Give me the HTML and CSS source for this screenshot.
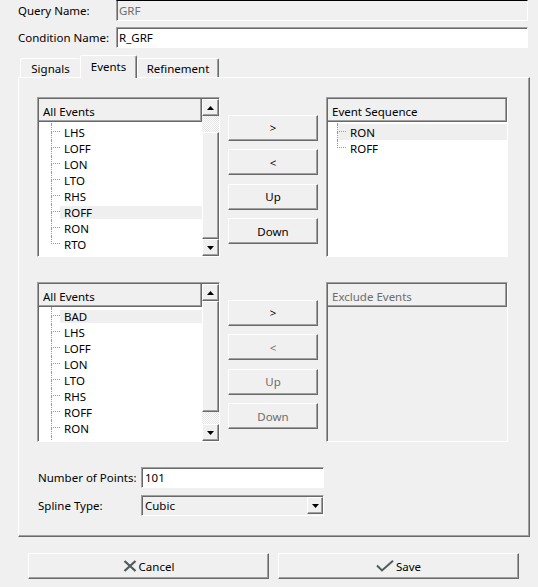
FILE: index.html
```html
<!DOCTYPE html>
<html>
<head>
<meta charset="utf-8">
<title>Condition</title>
<link rel="stylesheet" href="styles.css">
</head>
<body>
<div class="app">
  <div class="field-row">
    <span class="lbl">Query Name:</span>
    <div class="entry ro">GRF</div>
  </div>
  <div class="field-row r2">
    <span class="lbl">Condition Name:</span>
    <div class="entry">R_GRF</div>
  </div>

  <div class="tabs">
    <div class="tab t-signals">Signals</div>
    <div class="tab t-events">Events</div>
    <div class="tab t-ref">Refinement</div>
  </div>

  <div class="panel">
    <div class="section">
      <div class="tree">
        <div class="tree-main">
          <div class="tree-head">All Events</div>
          <div class="tree-body">
            <div class="row"><span class="conn"><i></i><b></b></span><span class="item">LHS</span></div>
            <div class="row"><span class="conn"><i></i><b></b></span><span class="item">LOFF</span></div>
            <div class="row"><span class="conn"><i></i><b></b></span><span class="item">LON</span></div>
            <div class="row"><span class="conn"><i></i><b></b></span><span class="item">LTO</span></div>
            <div class="row"><span class="conn"><i></i><b></b></span><span class="item">RHS</span></div>
            <div class="row"><span class="conn"><i></i><b></b></span><span class="item sel">ROFF</span></div>
            <div class="row"><span class="conn"><i></i><b></b></span><span class="item">RON</span></div>
            <div class="row"><span class="conn"><i></i></span><span class="item">RTO</span></div>
          </div>
        </div>
        <div class="vscroll">
          <div class="sb-btn"><svg width="7" height="4" viewBox="0 0 7 4"><path d="M0 4H7L3.5 0Z" fill="#000"/></svg></div>
          <div class="sb-trough t1"></div>
          <div class="sb-thumb th1"></div>
          <div class="sb-btn"><svg width="7" height="4" viewBox="0 0 7 4"><path d="M0 0H7L3.5 4Z" fill="#000"/></svg></div>
        </div>
      </div>

      <div class="btns">
        <div class="btn">&gt;</div>
        <div class="btn">&lt;</div>
        <div class="btn">Up</div>
        <div class="btn">Down</div>
      </div>

      <div class="tree seq">
        <div class="tree-main">
          <div class="tree-head">Event Sequence</div>
          <div class="tree-body">
            <div class="row full-sel"><span class="conn"><i></i><b></b></span><span class="item">RON</span></div>
            <div class="row"><span class="conn"><i></i></span><span class="item">ROFF</span></div>
          </div>
        </div>
      </div>
    </div>

    <div class="section s2">
      <div class="tree">
        <div class="tree-main">
          <div class="tree-head">All Events</div>
          <div class="tree-body b2">
            <div class="row"><span class="conn"><i></i><b></b></span><span class="item sel">BAD</span></div>
            <div class="row"><span class="conn"><i></i><b></b></span><span class="item">LHS</span></div>
            <div class="row"><span class="conn"><i></i><b></b></span><span class="item">LOFF</span></div>
            <div class="row"><span class="conn"><i></i><b></b></span><span class="item">LON</span></div>
            <div class="row"><span class="conn"><i></i><b></b></span><span class="item">LTO</span></div>
            <div class="row"><span class="conn"><i></i><b></b></span><span class="item">RHS</span></div>
            <div class="row"><span class="conn"><i></i><b></b></span><span class="item">ROFF</span></div>
            <div class="row"><span class="conn"><i></i><b></b></span><span class="item">RON</span></div>
            <div class="row"><span class="conn"><i></i><b></b></span><span class="item">RTO</span></div>
          </div>
        </div>
        <div class="vscroll">
          <div class="sb-btn"><svg width="7" height="4" viewBox="0 0 7 4"><path d="M0 4H7L3.5 0Z" fill="#000"/></svg></div>
          <div class="sb-thumb th2"></div>
          <div class="sb-trough t2"></div>
          <div class="sb-btn"><svg width="7" height="4" viewBox="0 0 7 4"><path d="M0 0H7L3.5 4Z" fill="#000"/></svg></div>
        </div>
      </div>

      <div class="btns">
        <div class="btn">&gt;</div>
        <div class="btn dis">&lt;</div>
        <div class="btn dis">Up</div>
        <div class="btn dis">Down</div>
      </div>

      <div class="tree seq disabled">
        <div class="tree-main">
          <div class="tree-head">Exclude Events</div>
          <div class="tree-body empty"></div>
        </div>
      </div>
    </div>

    <div class="opts">
      <span class="olbl">Number of Points:</span>
      <div class="entry">101</div>
      <span class="olbl">Spline Type:</span>
      <div class="combo">
        <span class="combo-text">Cubic</span>
        <span class="combo-btn"><svg width="7" height="4" viewBox="0 0 7 4"><path d="M0 0H7L3.5 4Z" fill="#000"/></svg></span>
      </div>
    </div>
  </div>

  <div class="footer">
    <div class="btn big">
      <svg class="ico" width="14" height="12" viewBox="0 0 14 12"><path d="M1.5 1L12.5 11M12.5 1L1.5 11" stroke="#4d5b5b" stroke-width="2.3" fill="none"/></svg>
      <span>Cancel</span>
    </div>
    <div class="btn big">
      <svg class="ico" width="18" height="12" viewBox="0 0 18 12"><path d="M1 5.5L6 10.5L17 0.8" stroke="#4d5b5b" stroke-width="2" fill="none"/></svg>
      <span>Save</span>
    </div>
  </div>
</div>
</body>
</html>
```

FILE: styles.css
```css
* { box-sizing: border-box; }
html, body { margin: 0; padding: 0; }
body {
  background: #f0f0f0;
  font-family: "Noto Sans", "Segoe UI", sans-serif;
  font-size: 11.5px;
  color: #000;
  width: 538px;
  height: 587px;
  overflow: hidden;
}
.app { display: flex; flex-direction: column; }

.field-row {
  display: flex;
  align-items: center;
  margin-left: 18px;
  width: 510px;
  height: 21px;
}
.r2 { margin-top: 6px; }
.lbl { width: 98px; flex: none; }

.entry {
  flex: 1;
  height: 21px;
  display: flex;
  align-items: center;
  padding-left: 2px;
  background: #fff;
  border: 1px solid;
  border-color: #a0a0a0 #fff #fff #a0a0a0;
  box-shadow: inset 1px 1px #696969;
  white-space: nowrap;
}
.entry.ro {
  background: #f0f0f0;
  color: #6d6d6d;
  border-top-color: #000;
  box-shadow: inset 1px 0 #696969;
}

/* tabs */
.tabs {
  display: flex;
  align-items: flex-end;
  margin: 7px 0 0 20px;
  height: 22px;
  position: relative;
  z-index: 1;
}
.tab {
  height: 19px;
  display: flex;
  align-items: center;
  justify-content: center;
  border-top: 1px solid #fff;
  border-left: 1px solid #fff;
  border-radius: 2px 2px 0 0;
  background: #f0f0f0;
  padding-top: 1px;
}
.t-signals { width: 60px; }
.t-events {
  width: 57px;
  height: 23px;
  margin-bottom: -1px;
  padding-bottom: 2px;
  border-right: 1px solid #696969;
  box-shadow: inset -1px 0 #a0a0a0;
}
.t-ref {
  width: 82px;
  border-right: 1px solid #696969;
  box-shadow: inset -1px 0 #a0a0a0;
}

/* panel */
.panel {
  margin-left: 18px;
  width: 512px;
  height: 460px;
  border: 1px solid;
  border-color: #fff #696969 #696969 #fff;
  box-shadow: inset -1px -1px #a0a0a0;
  padding: 19px 0 0 18px;
  display: flex;
  flex-direction: column;
}
.section {
  display: grid;
  grid-template-columns: 183px 90px 182px;
  column-gap: 8px;
  height: 160px;
}
.s2 { margin-top: 25px; }

/* tree view */
.tree {
  display: flex;
  height: 160px;
  background: #fff;
  border: 1px solid;
  border-color: #a0a0a0 #fff #fff #a0a0a0;
  padding: 1px 0 0 1px;
  box-shadow: inset 1px 1px #696969;
}
.tree.disabled { background: #f0f0f0; }
.tree-main {
  flex: 1;
  display: flex;
  flex-direction: column;
  min-width: 0;
}
.tree-head {
  height: 23px;
  flex: none;
  display: flex;
  align-items: center;
  padding: 2px 0 0 4px;
  background: #f0f0f0;
  border-right: 1px solid #696969;
  border-bottom: 1px solid #696969;
  box-shadow: inset -1px -1px #a0a0a0;
}
.disabled .tree-head { color: #6d6d6d; }
.tree-body {
  flex: 1;
  padding-top: 2px;
  overflow: hidden;
  background: linear-gradient(#9a9a9a, #9a9a9a) 12px 1px / 1px 1px no-repeat;
}
.seq .tree-body { background-position: 9px 1px; }
.tree-body.empty { background: none; }
.tree-body.b2 { padding-top: 1px; background-position: 12px 0; }
.row {
  height: 16px;
  display: flex;
  align-items: center;
}
.conn {
  flex: none;
  width: 9px;
  height: 16px;
  margin-left: 12px;
  display: flex;
  flex-direction: column;
}
.seq .conn { margin-left: 9px; }
.conn i {
  display: block;
  height: 8px;
  border-left: 1px dotted #9a9a9a;
  border-bottom: 1px dotted #9a9a9a;
}
.conn b {
  display: block;
  flex: 1;
  border-left: 1px dotted #9a9a9a;
}
.item {
  flex: 1;
  height: 13px;
  line-height: 13px;
  padding-left: 4px;
  margin-top: 1px;
  white-space: nowrap;
}
.item.sel { background: #efefef; }
.full-sel { background: linear-gradient(to right, transparent 10px, #efefef 10px); }
.full-sel .item { margin-top: 0; }

/* scrollbar */
.vscroll {
  width: 17px;
  flex: none;
  display: flex;
  flex-direction: column;
  background: #f0f0f0;
}
.sb-btn, .sb-thumb, .combo-btn {
  background: #f0f0f0;
  border: 1px solid;
  border-color: #fff #696969 #696969 #fff;
  box-shadow: inset -1px -1px #a0a0a0;
}
.sb-btn {
  height: 17px;
  flex: none;
  display: flex;
  align-items: center;
  justify-content: center;
}
.sb-btn svg, .combo-btn svg { display: block; }
.sb-trough {
  flex: none;
  background: repeating-conic-gradient(#ffffff 0 25%, #e4e4e4 0 50%) 0 0 / 2px 2px;
}
.t1 { height: 16px; }
.th1 { height: 107px; flex: none; }
.th2 { height: 111px; flex: none; }
.t2 { height: 12px; }

/* buttons */
.btns {
  display: flex;
  flex-direction: column;
  gap: 8.5px;
  padding-top: 17.5px;
}
.btn {
  height: 26px;
  flex: none;
  display: flex;
  align-items: center;
  justify-content: center;
  background: #f0f0f0;
  border: 1px solid;
  border-color: #fff #696969 #696969 #fff;
  box-shadow: inset -1px -1px #a0a0a0;
}
.btn.dis { color: #6d6d6d; }

/* options */
.opts {
  margin: 25px 0 0 1px;
  display: grid;
  grid-template-columns: 103px 183px;
  grid-auto-rows: 21px;
  row-gap: 7px;
  align-items: center;
}
.opts .entry { height: 21px; padding-left: 3px; }
.combo {
  height: 21px;
  display: flex;
  align-items: center;
  background: #f0f0f0;
  border: 1px solid;
  border-color: #a0a0a0 #fff #fff #a0a0a0;
  box-shadow: inset 1px 1px #696969;
  padding-left: 3px;
}
.combo-text { flex: 1; }
.combo-btn {
  width: 16px;
  height: 17px;
  display: flex;
  align-items: center;
  justify-content: center;
}

/* footer */
.footer {
  display: flex;
  gap: 9px;
  margin: 16px 0 0 28px;
}
.btn.big { width: 241px; }
.ico { display: block; margin-right: 2px; }
```
